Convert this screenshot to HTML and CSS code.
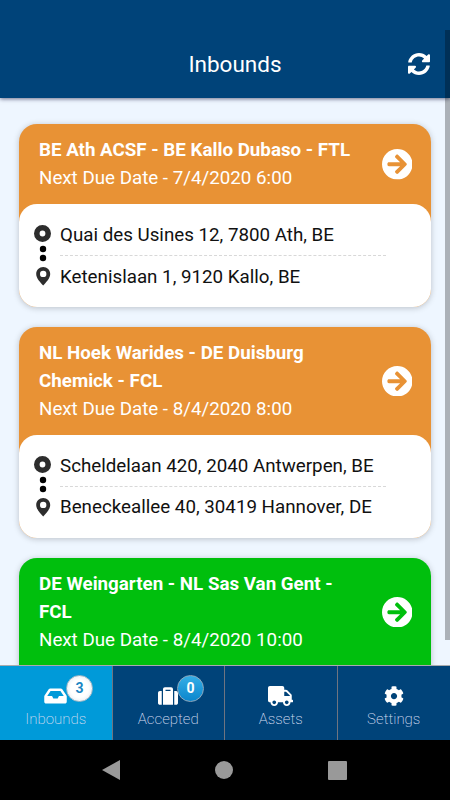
FILE: index.html
```html
<!DOCTYPE html>
<html lang="en">
<head>
  <meta charset="UTF-8" />
  <meta name="viewport" content="width=device-width, initial-scale=1.0"/>
  <title>Inbounds</title>
  <link rel="stylesheet" href="styles.css">
</head>
<body>
  <!-- Shared icons -->
  <svg class="sprite" width="0" height="0">
    <symbol id="go" viewBox="8 8 496 496">
      <path d="M256 8c137 0 248 111 248 248S393 504 256 504 8 393 8 256 119 8 256 8zm-28.9 143.6l75.5 72.4H120c-13.3 0-24 10.7-24 24v16c0 13.3 10.7 24 24 24h182.6l-75.5 72.4c-9.7 9.3-9.9 24.8-.4 34.3l11 10.9c9.4 9.4 24.6 9.4 33.9 0L404.3 273c9.4-9.4 9.4-24.6 0-33.9L271.6 106.3c-9.4-9.4-24.6-9.4-33.9 0l-11 10.9c-9.5 9.6-9.3 25.1.4 34.4z"/>
    </symbol>
    <symbol id="route" viewBox="0 0 18 62">
      <circle cx="8.5" cy="9.5" r="5.7" fill="none" stroke="#2d2d2d" stroke-width="5.6"/>
      <circle cx="9" cy="25" r="3.2" fill="#000"/>
      <circle cx="9" cy="34" r="3.2" fill="#000"/>
      <path fill="#2d2d2d" fill-rule="evenodd" d="M9.2 43c-3.9 0-7 3.1-7 6.9 0 4.6 4.6 8.7 7 11.6 2.4-2.9 7-7 7-11.6 0-3.8-3.1-6.9-7-6.9zm0 3.7a3.2 3.2 0 1 1 0 6.4 3.2 3.2 0 0 1 0-6.4z"/>
    </symbol>
  </svg>

  <div class="app">
    <header class="header">
      <h1>Inbounds</h1>
      <svg class="refresh" viewBox="8 8 496 496"><path d="M370.72 133.28C339.458 104.008 298.888 87.962 255.848 88c-77.458.068-144.328 53.178-162.791 126.85-1.344 5.363-6.122 9.15-11.651 9.15H24.103c-7.498 0-13.194-6.807-11.807-14.176C33.933 94.924 134.813 8 256 8c66.448 0 126.791 26.136 171.315 68.685L463.03 40.97C478.149 25.851 504 36.559 504 57.941V192c0 13.255-10.745 24-24 24H345.941c-21.382 0-32.09-25.851-16.971-40.971l41.75-41.749zM32 296h134.059c21.382 0 32.09 25.851 16.971 40.971l-41.75 41.75c31.262 29.273 71.835 45.319 114.876 45.28 77.418-.07 144.315-53.144 162.787-126.849 1.344-5.363 6.122-9.15 11.651-9.15h57.304c7.498 0 13.194 6.807 11.807 14.176C478.067 417.076 377.187 504 256 504c-66.448 0-126.791-26.136-171.315-68.685L48.97 471.03C33.851 486.149 8 475.441 8 454.059V320c0-13.255 10.745-24 24-24z"/></svg>
    </header>

    <!-- Inbound list -->
    <main class="list">
      <article class="card">
        <div class="card-head">
          <div class="card-text">
            <h2>BE Ath ACSF - BE Kallo Dubaso - FTL</h2>
            <p>Next Due Date - 7/4/2020 6:00</p>
          </div>
          <svg class="go"><use href="#go"/></svg>
        </div>
        <div class="card-body">
          <svg class="route"><use href="#route"/></svg>
          <div class="stops">
            <p>Quai des Usines 12, 7800 Ath, BE</p>
            <p>Ketenislaan 1, 9120 Kallo, BE</p>
          </div>
        </div>
      </article>

      <article class="card">
        <div class="card-head">
          <div class="card-text">
            <h2>NL Hoek Warides - DE Duisburg Chemick - FCL</h2>
            <p>Next Due Date - 8/4/2020 8:00</p>
          </div>
          <svg class="go"><use href="#go"/></svg>
        </div>
        <div class="card-body">
          <svg class="route"><use href="#route"/></svg>
          <div class="stops">
            <p>Scheldelaan 420, 2040 Antwerpen, BE</p>
            <p>Beneckeallee 40, 30419 Hannover, DE</p>
          </div>
        </div>
      </article>

      <article class="card green">
        <div class="card-head">
          <div class="card-text">
            <h2>DE Weingarten - NL Sas Van Gent - FCL</h2>
            <p>Next Due Date - 8/4/2020 10:00</p>
          </div>
          <svg class="go"><use href="#go"/></svg>
        </div>
        <div class="card-body"></div>
      </article>
    </main>

    <!-- Tabs -->
    <nav class="tabs">
      <a class="tab active">
        <svg width="23" height="20" viewBox="0 0 576 512"><path d="M567.938 243.908L462.25 85.374A48.003 48.003 0 0 0 422.311 64H153.689a48 48 0 0 0-39.938 21.374L8.062 243.908A47.994 47.994 0 0 0 0 270.533V400c0 26.51 21.49 48 48 48h480c26.51 0 48-21.49 48-48V270.533a47.994 47.994 0 0 0-8.062-26.625zM162.252 128h251.497l85.333 128H376l-32 64H232l-32-64H76.918l85.334-128z"/></svg>
        <span>Inbounds</span>
        <b class="badge">3</b>
      </a>
      <a class="tab">
        <svg width="20" height="20" viewBox="0 0 512 512"><path d="M128 480h256V80c0-26.5-21.5-48-48-48H176c-26.5 0-48 21.5-48 48v400zm64-384h128v32H192V96zm320 80v256c0 26.5-21.5 48-48 48h-48V128h48c26.5 0 48 21.5 48 48zM96 480H48c-26.5 0-48-21.5-48-48V176c0-26.5 21.5-48 48-48h48v352z"/></svg>
        <span>Accepted</span>
        <b class="badge">0</b>
      </a>
      <a class="tab">
        <svg width="25" height="20" viewBox="0 0 640 512"><path d="M624 352h-16V243.9c0-12.7-5.1-24.9-14.1-33.9L494 110.1c-9-9-21.2-14.1-33.9-14.1H416V48c0-26.5-21.5-48-48-48H48C21.5 0 0 21.5 0 48v320c0 26.5 21.5 48 48 48h16c0 53 43 96 96 96s96-43 96-96h128c0 53 43 96 96 96s96-43 96-96h48c8.8 0 16-7.2 16-16v-32c0-8.8-7.2-16-16-16zM160 464c-26.5 0-48-21.5-48-48s21.5-48 48-48 48 21.5 48 48-21.5 48-48 48zm320 0c-26.5 0-48-21.5-48-48s21.5-48 48-48 48 21.5 48 48-21.5 48-48 48zm80-208H416V144h44.1l99.9 99.9V256z"/></svg>
        <span>Assets</span>
      </a>
      <a class="tab">
        <svg width="20" height="20" viewBox="0 0 512 512"><path d="M487.4 315.7l-42.6-24.6c4.3-23.2 4.3-47 0-70.2l42.6-24.6c4.9-2.8 7.1-8.6 5.5-14-11.1-35.6-30-67.8-54.7-94.6-3.8-4.1-10-5.1-14.8-2.3L380.8 110c-17.9-15.4-38.5-27.3-60.8-35.1V25.8c0-5.6-3.9-10.5-9.4-11.7-36.7-8.2-74.3-7.8-109.2 0-5.5 1.2-9.4 6.1-9.4 11.7V75c-22.2 7.9-42.8 19.8-60.8 35.1L88.7 85.5c-4.9-2.8-11-1.9-14.8 2.3-24.7 26.7-43.6 58.9-54.7 94.6-1.7 5.4.6 11.2 5.5 14L67.3 221c-4.3 23.2-4.3 47 0 70.2l-42.6 24.6c-4.9 2.8-7.1 8.6-5.5 14 11.1 35.6 30 67.8 54.7 94.6 3.8 4.1 10 5.1 14.8 2.3l42.6-24.6c17.9 15.4 38.5 27.3 60.8 35.1v49.2c0 5.6 3.9 10.5 9.4 11.7 36.7 8.2 74.3 7.8 109.2 0 5.5-1.2 9.4-6.1 9.4-11.7v-49.2c22.2-7.9 42.8-19.8 60.8-35.1l42.6 24.6c4.9 2.8 11 1.9 14.8-2.3 24.7-26.7 43.6-58.9 54.7-94.6 1.5-5.5-.7-11.3-5.6-14.1zM256 336c-44.1 0-80-35.9-80-80s35.9-80 80-80 80 35.9 80 80-35.9 80-80 80z"/></svg>
        <span>Settings</span>
      </a>
    </nav>

    <!-- Android buttons -->
    <footer class="system">
      <svg width="18" height="20" viewBox="0 0 18 20"><path d="M0 10L18 0v20z"/></svg>
      <svg width="18" height="18" viewBox="0 0 18 18"><circle cx="9" cy="9" r="9"/></svg>
      <svg width="19" height="19" viewBox="0 0 19 19"><rect width="19" height="19" rx="1"/></svg>
    </footer>

    <div class="scrollbar"></div>
  </div>
</body>
</html>
```

FILE: styles.css
```css
* {
  box-sizing: border-box;
}
body {
  margin: 0;
  font-family: Roboto, sans-serif;
}
h1, h2, p {
  margin: 0;
}
.sprite {
  position: absolute;
}
.app {
  position: relative;
  display: flex;
  flex-direction: column;
  height: 800px;
  background-color: #eef6ff;
  overflow: hidden;
}

/* Header */
.header {
  flex: none;
  display: grid;
  grid-template-columns: 1fr auto 1fr;
  align-items: center;
  height: 98px;
  padding: 30px 20px 0 40px;
  background-color: #004379;
  color: #fff;
  box-shadow: 0 1px 4px rgba(20, 20, 60, 0.6);
  z-index: 1;
}
.header h1 {
  grid-column: 2;
  padding-bottom: 1px;
  font-size: 22.5px;
  font-weight: 400;
}
.refresh {
  justify-self: end;
  width: 22px;
  height: 22px;
  fill: #fff;
}

/* Cards */
.list {
  flex: 1;
  min-height: 0;
  display: flex;
  flex-direction: column;
  gap: 20px;
  padding: 26px 19px 0;
  overflow: hidden;
}
.card {
  flex: none;
  border-radius: 18px;
  background-color: #e89235;
  box-shadow: 0 1px 6px rgba(0, 0, 0, 0.22);
}
.card.green {
  background-color: #00bf0d;
}
.card-head {
  display: flex;
  align-items: center;
  justify-content: space-between;
  padding: 12.4px 19px 12px 20px;
  color: #fff;
  font-size: 18.75px;
  line-height: 28px;
}
.card-text {
  width: 320px;
}
.card-head h2 {
  font-size: inherit;
  font-weight: 700;
}
.go {
  width: 30.5px;
  height: 30.5px;
  fill: #fff;
}
.card-body {
  display: flex;
  gap: 8px;
  height: 102.4px;
  padding: 19.4px 45px 0 15px;
  border-radius: 18px;
  background-color: #fff;
}
.route {
  flex: none;
  width: 18px;
  height: 62px;
}
.stops {
  width: 326px;
  color: #111;
  font-size: 18.75px;
  line-height: 22px;
}
.stops p {
  height: 31.5px;
  white-space: nowrap;
}
.stops p + p {
  padding-top: 9.3px;
  border-top: 1px dashed #d8d8d8;
}

/* Tabs */
.tabs {
  flex: none;
  display: grid;
  grid-template-columns: repeat(4, 1fr);
  height: 75px;
  border-top: 1px solid #a9abae;
  background-color: #004379;
}
.tab {
  position: relative;
  display: flex;
  flex-direction: column;
  align-items: center;
  padding-top: 20px;
  border-right: 1px solid #6f7480;
  color: #d3dbf0;
  font-size: 15px;
  font-weight: 200;
  line-height: 27px;
}
.tab:last-child {
  border-right: none;
}
.tab.active {
  background-color: #009ad9;
}
.tab svg {
  fill: #fff;
}
.badge {
  position: absolute;
  top: 9px;
  left: 64.5px;
  width: 27px;
  height: 27px;
  border: 1px solid #8fa9bd;
  border-radius: 50%;
  background: linear-gradient(#35aee6, #0b86cd);
  color: #fff;
  font-size: 14px;
  font-weight: 700;
  line-height: 25px;
  text-align: center;
}
.active .badge {
  left: 66px;
  border-color: #a5b9c6;
  background: radial-gradient(#fff 50%, #d8e4ee);
  color: #1a86c4;
}

/* Android buttons */
.system {
  flex: none;
  display: flex;
  align-items: center;
  gap: 95px;
  height: 60px;
  padding-left: 102.3px;
  background-color: #000;
}
.system svg {
  fill: #999;
}

.scrollbar {
  position: absolute;
  top: 30px;
  right: 0;
  width: 5px;
  height: 610px;
  background-color: rgba(0, 0, 0, 0.28);
  z-index: 2;
}
```
